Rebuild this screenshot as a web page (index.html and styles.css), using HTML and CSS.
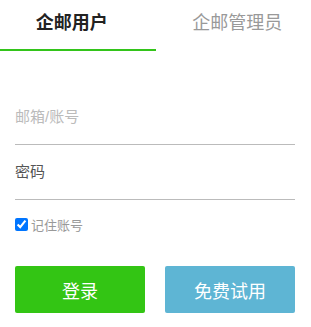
FILE: index.html
```html
<!DOCTYPE html>
<html lang="zh-CN">

<head>
  <meta charset="UTF-8">
  <meta name="viewport" content="width=device-width, initial-scale=1.0">
  <title>企邮登录</title>
  <link rel="stylesheet" href="styles.css">
</head>

<body>
  <!-- 顶部切换 -->
  <div class="tabs">
    <div class="tab active">企邮用户</div>
    <div class="tab">企邮管理员</div>
  </div>

  <!-- 登录表单 -->
  <form class="login-form">
    <div class="field">
      <input type="text" class="field-input" placeholder="邮箱/账号">
    </div>
    <div class="field">
      <input type="password" class="field-input pwd" placeholder="密码">
    </div>
    <label class="remember">
      <input type="checkbox" checked>
      <span>记住账号</span>
    </label>
    <div class="actions">
      <button type="button" class="btn btn-login">登录</button>
      <button type="button" class="btn btn-trial">免费试用</button>
    </div>
  </form>
</body>

</html>
```

FILE: styles.css
```css
/* 整体 */
body {
  margin: 0;
  background: #fff;
  font-family: "Liberation Sans", "Noto Sans CJK SC", sans-serif;
}

/* 顶部切换 */
.tabs {
  display: flex;
}

.tab {
  flex: 0 0 50%;
  box-sizing: border-box;
  height: 51px;
  line-height: 46px;
  text-align: center;
  font-size: 18px;
  color: #999;
  border-bottom: 2px solid transparent;
}

.tab:first-child {
  padding-right: 12px;
}

.tab:last-child {
  padding-left: 8px;
}

.tab.active {
  color: #222;
  font-weight: bold;
  border-bottom-color: #33c41a;
}

/* 表单 */
.login-form {
  padding: 39px 16px 0 15px;
}

.field {
  height: 54px;
  border-bottom: 1px solid #bbb;
  display: flex;
  align-items: center;
}

.field-input {
  width: 100%;
  border: none;
  outline: none;
  padding: 0;
  margin-top: -1px;
  font-size: 15px;
  font-family: inherit;
  color: #333;
  background: transparent;
}

.field-input::placeholder {
  color: #bbb;
}

.field-input.pwd::placeholder {
  color: #555;
}

/* 记住账号 */
.remember {
  display: flex;
  align-items: center;
  margin-top: 15px;
  font-size: 13px;
  color: #999;
}

.remember input {
  margin: 0 3px 0 0;
  width: 13px;
  height: 13px;
}

/* 按钮 */
.actions {
  display: flex;
  justify-content: space-between;
  margin-top: 32px;
}

.btn {
  width: 130px;
  height: 47px;
  border: none;
  border-radius: 2px;
  color: #fff;
  font-size: 18px;
  font-family: inherit;
  cursor: pointer;
}

.btn-login {
  background-color: #33c514;
}

.btn-trial {
  background-color: #5eb5d4;
}
```
